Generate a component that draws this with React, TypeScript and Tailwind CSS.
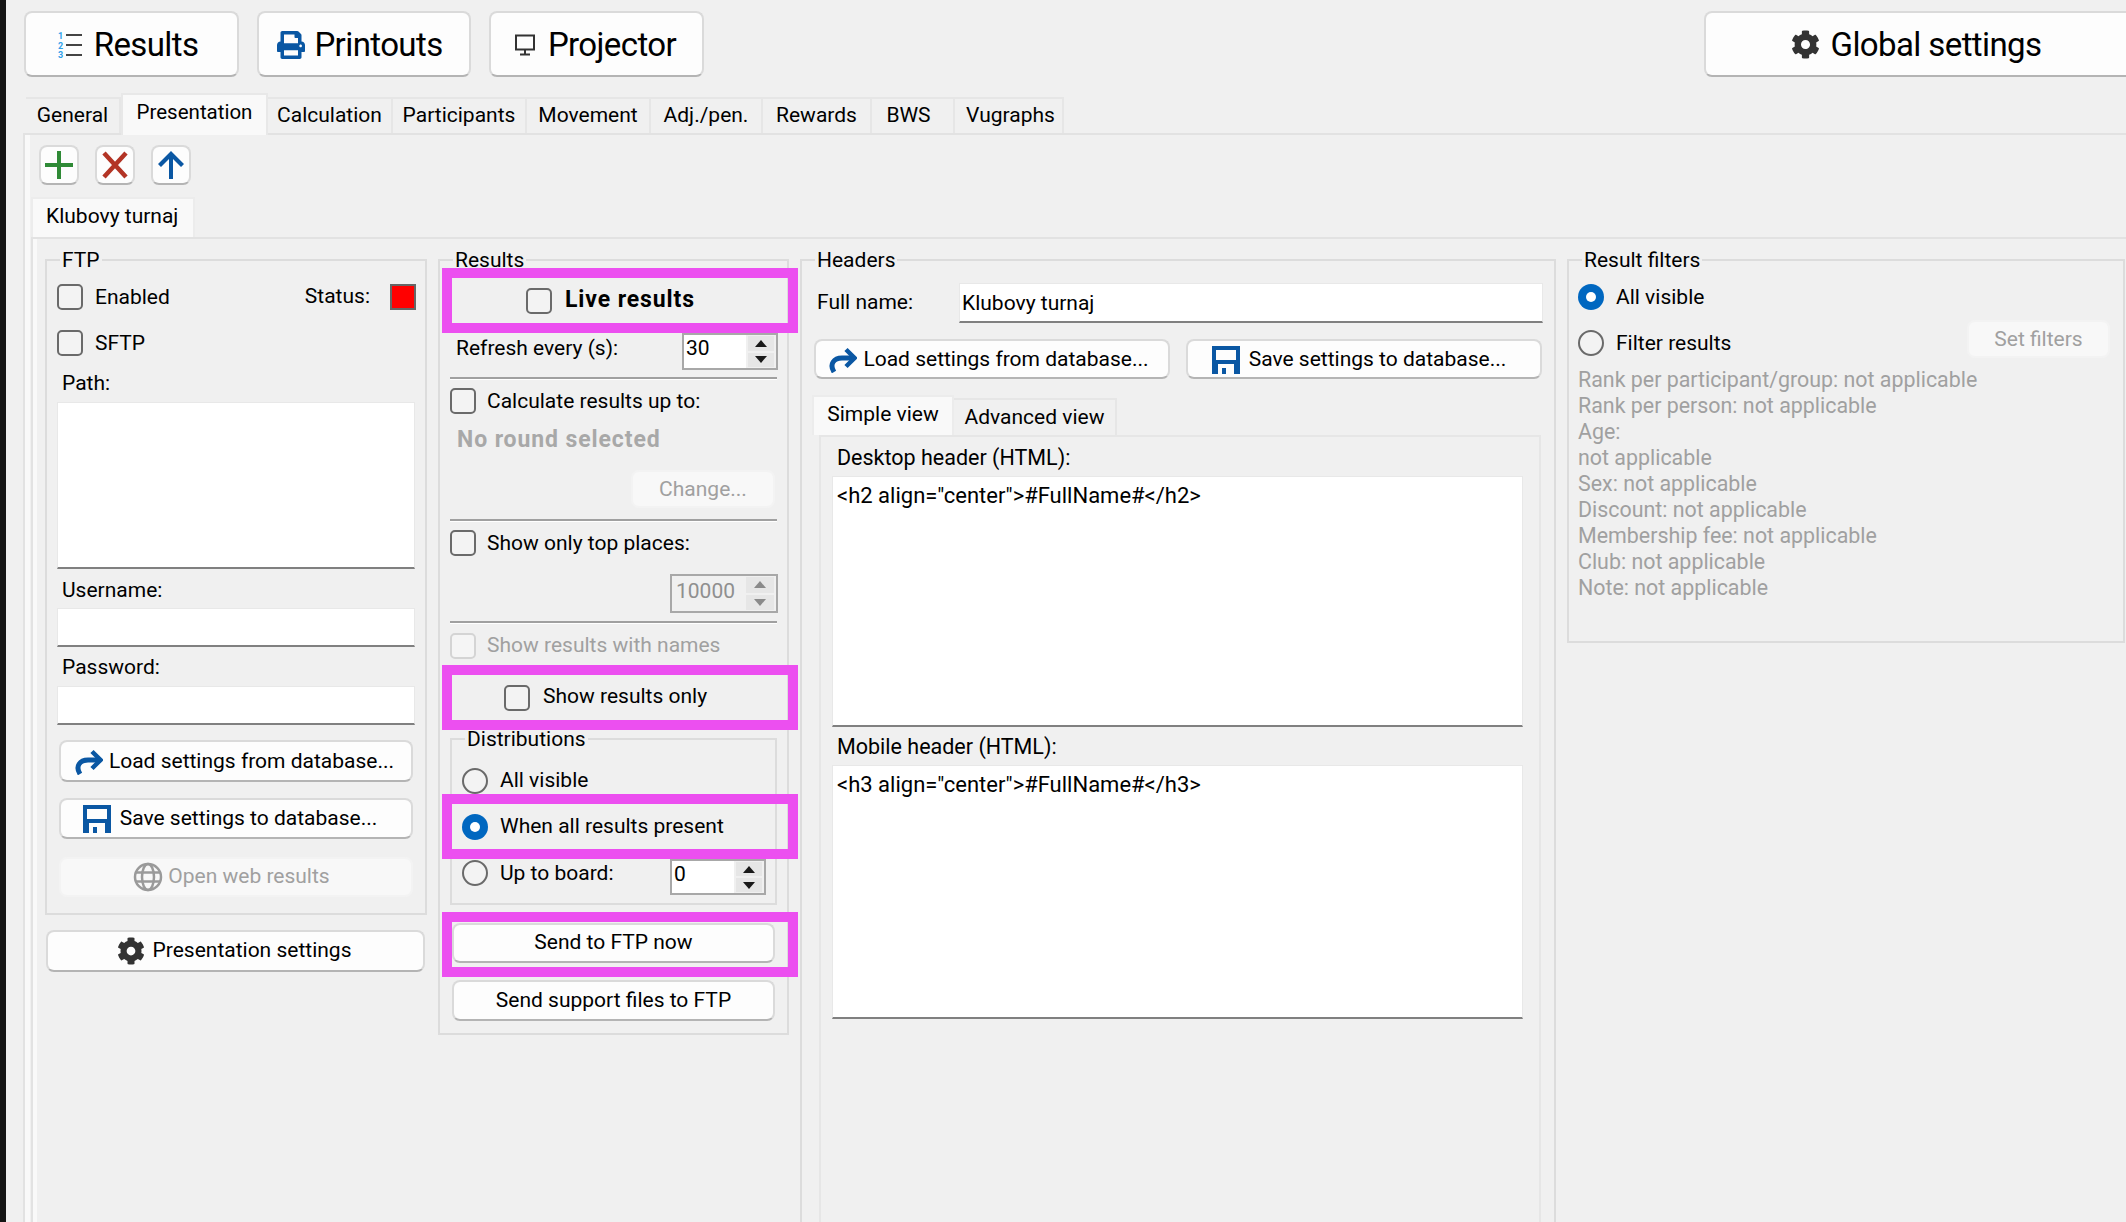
import type { ReactNode } from "react";
import { FaCog, FaPrint } from "react-icons/fa";

function Gear({ size }: { size: number }) {
  return <FaCog size={size} className="shrink-0 text-[#333333]" />;
}

function ReplyIcon() {
  return (
    <svg width="28" height="26" viewBox="0 0 28 26" fill="none" className="shrink-0">
      <path d="M5 25 C0 17 5 11 13 11 L24 11" stroke="#0a57a3" strokeWidth="5" />
      <path d="M17 2.5 L25.5 11 L17 19.5" stroke="#0a57a3" strokeWidth="4.5" />
    </svg>
  );
}

function SaveIcon() {
  return (
    <svg width="28" height="28" viewBox="0 0 28 28" className="shrink-0">
      <path
        fillRule="evenodd"
        d="M0 0H28V28H22V18H6V28H0ZM4 4V14H24V4ZM10 22H14V28H10Z"
        fill="#0a57a3"
      />
    </svg>
  );
}

function GlobeIcon() {
  return (
    <svg width="30" height="30" viewBox="0 0 30 30" fill="none" stroke="#9a9a9a" strokeWidth="2.5" className="shrink-0">
      <circle cx="15" cy="15" r="13" />
      <ellipse cx="15" cy="15" rx="6" ry="13" />
      <path d="M2 10.5H28M2 19.5H28" />
    </svg>
  );
}

function ListIcon() {
  return (
    <svg width="26" height="30" viewBox="0 0 26 30" className="shrink-0">
      <text x="1" y="9" fontSize="9" fontWeight="700" fill="#2fa0ea">1</text>
      <text x="1" y="18.5" fontSize="9" fontWeight="700" fill="#2fa0ea">2</text>
      <text x="1" y="28" fontSize="9" fontWeight="700" fill="#2fa0ea">3</text>
      <path d="M9 4H25V6H9ZM9 14H25V16H9ZM9 24H25V26H9Z" fill="#444444" />
    </svg>
  );
}

function MonitorIcon() {
  return (
    <svg width="22" height="22" viewBox="0 0 22 22" fill="none" className="shrink-0">
      <rect x="2" y="1.5" width="18" height="14" stroke="#333333" strokeWidth="2" />
      <path d="M11 16V20M6 20.5H16" stroke="#333333" strokeWidth="2" />
    </svg>
  );
}

function Checkbox({ disabled }: { disabled?: boolean }) {
  return (
    <span
      className={
        disabled
          ? "h-[26px] w-[26px] shrink-0 rounded-[5px] border-2 border-[#d4d4d4] bg-[#f5f5f5]"
          : "h-[26px] w-[26px] shrink-0 rounded-[5px] border-2 border-[#6a6a6a] bg-[#f3f3f3]"
      }
    />
  );
}

function Radio({ checked }: { checked?: boolean }) {
  if (checked) {
    return (
      <span className="flex h-[26px] w-[26px] shrink-0 items-center justify-center rounded-full bg-[#0067c0]">
        <span className="h-[10px] w-[10px] rounded-full bg-white" />
      </span>
    );
  }
  return <span className="h-[26px] w-[26px] shrink-0 rounded-full border-2 border-[#6a6a6a] bg-[#f3f3f3]" />;
}

function Btn({
  children,
  className,
  disabled,
}: {
  children: ReactNode;
  className: string;
  disabled?: boolean;
}) {
  return (
    <div
      className={`flex shrink-0 items-center justify-center rounded-[8px] border-2 ${
        disabled
          ? "border-[#f3f3f3] bg-[#f8f8f8] text-[#a0a0a0]"
          : "border-[#dadada] border-b-[#b4b4b4] bg-[#fdfdfd] text-black"
      } ${className}`}
    >
      {children}
    </div>
  );
}

function Group({
  title,
  legendLeft,
  className,
  children,
}: {
  title: string;
  legendLeft: string;
  className: string;
  children: ReactNode;
}) {
  return (
    <div className={`relative shrink-0 border-2 border-[#dcdcdc] ${className}`}>
      <span className={`absolute -top-[16px] ${legendLeft} bg-[#f0f0f0] px-[2px] leading-[30px]`}>{title}</span>
      {children}
    </div>
  );
}

function Input({ className, children }: { className: string; children?: ReactNode }) {
  return (
    <div className={`shrink-0 border border-b-2 border-[#e8e8e8] border-b-[#808080] bg-white ${className}`}>
      {children}
    </div>
  );
}

function Spinner({
  value,
  className,
  disabled,
  textClass,
}: {
  value: string;
  className: string;
  disabled?: boolean;
  textClass: string;
}) {
  const arrow = disabled ? "#8a8a8a" : "#1a1a1a";
  return (
    <div
      className={`flex shrink-0 border-2 ${
        disabled ? "border-[#a8a8a8] bg-[#f0f0f0] text-[#8f8f8f]" : "border-[#a8a8a8] bg-white text-black"
      } ${className}`}
    >
      <span className={`pl-[2px] ${textClass}`}>{value}</span>
      <div className="flex flex-1 flex-col gap-[2px] bg-[#f0f0f0] px-[2px] py-[1px]">
        <div className="flex flex-1 items-center justify-center bg-[#e6e6e6]">
          <svg width="12" height="7" viewBox="0 0 12 7">
            <path d="M6 0L12 7H0Z" fill={arrow} />
          </svg>
        </div>
        <div className="flex flex-1 items-center justify-center bg-[#e6e6e6]">
          <svg width="12" height="7" viewBox="0 0 12 7">
            <path d="M6 7L12 0H0Z" fill={arrow} />
          </svg>
        </div>
      </div>
    </div>
  );
}

function Divider({ className }: { className: string }) {
  return <div className={`ml-[10px] h-[3px] w-[327px] border-t-2 border-[#a0a0a0] bg-white ${className}`} />;
}

function Pink({ className, children }: { className: string; children: ReactNode }) {
  return <div className={`relative z-10 w-[356px] shrink-0 border-[10px] border-[#ec4ff0] ${className}`}>{children}</div>;
}

const mainTabs = [
  { label: "General", w: "w-[95px]" },
  { label: "Presentation", w: "w-[147px]", active: true },
  { label: "Calculation", w: "w-[125px]" },
  { label: "Participants", w: "w-[134px]" },
  { label: "Movement", w: "w-[124px]" },
  { label: "Adj./pen.", w: "w-[112px]" },
  { label: "Rewards", w: "w-[109px]" },
  { label: "BWS", w: "w-[83px] pr-[8px]" },
  { label: "Vugraphs", w: "w-[109px] pl-[4px]" },
];

const filterLines = [
  "Rank per participant/group: not applicable",
  "Rank per person: not applicable",
  "Age:",
  "not applicable",
  "Sex: not applicable",
  "Discount: not applicable",
  "Membership fee: not applicable",
  "Club: not applicable",
  "Note: not applicable",
];

export default function App() {
  return (
    <div className="flex h-screen w-full overflow-hidden bg-[#f0f0f0] font-['Roboto',sans-serif] text-[21px] text-black">
      <div className="w-[6px] shrink-0 bg-[#141414]" />
      <div className="flex min-w-0 flex-1 flex-col">
        {/* top command bar */}
        <div className="flex h-[93px] shrink-0 items-start gap-[18px] pl-[18px] pt-[11px] text-[33px] tracking-[-0.6px]">
          <Btn className="h-[66px] w-[215px] gap-[11px] pr-[8px] pt-[1px]">
            <ListIcon />
            Results
          </Btn>
          <Btn className="h-[66px] w-[214px] gap-[9px] pr-[8px] pt-[1px]">
            <FaPrint size={28} className="shrink-0 text-[#0a57a3]" />
            Printouts
          </Btn>
          <Btn className="h-[66px] w-[215px] gap-[12px] pr-[3px] pt-[1px]">
            <MonitorIcon />
            Projector
          </Btn>
          <Btn className="ml-auto -mr-[30px] h-[66px] w-[452px] gap-[11px] pr-[28px] pt-[1px]">
            <Gear size={29} />
            Global settings
          </Btn>
        </div>

        {/* main tabs */}
        <div className="flex h-[40px] shrink-0 items-end pl-[20px]">
          {mainTabs.map((t) => (
            <div
              key={t.label}
              className={
                t.active
                  ? "z-10 -mb-[2px] flex h-[42px] items-start justify-center border-x-2 border-t-2 border-[#e8e8e8] bg-[#f9f9f9] pt-[2px] text-[20.5px] " + t.w
                  : "flex h-[36px] items-center justify-center border-r-2 border-t-2 border-[#e6e6e6] " + t.w
              }
            >
              {t.label}
            </div>
          ))}
        </div>

        {/* outer tab pane */}
        <div className="ml-[17px] flex min-h-0 flex-1 flex-col border-l-2 border-t-2 border-[#e2e2e2] bg-[#f9f9f9] pl-[5px]">
          <div className="flex min-h-0 flex-1 flex-col bg-[#f0f0f0]">
            <div className="ml-[9px] mt-[10px] flex gap-[16px]">
              <Btn className="h-[40px] w-[40px]">
                <svg width="32" height="32" viewBox="0 0 32 32">
                  <path d="M14 2H18V14H30V18H18V30H14V18H2V14H14Z" fill="#2f8a36" />
                </svg>
              </Btn>
              <Btn className="h-[40px] w-[40px]">
                <svg width="30" height="30" viewBox="0 0 30 30">
                  <path d="M4 3L26 27M26 3L4 27" stroke="#b33425" strokeWidth="4.5" />
                </svg>
              </Btn>
              <Btn className="h-[40px] w-[40px]">
                <svg width="28" height="32" viewBox="0 0 28 32">
                  <path d="M14 2L27 15L24 18L16 10V30H12V10L4 18L1 15Z" fill="#0a57a3" />
                </svg>
              </Btn>
            </div>
            <div className="ml-[1px] mt-[12px] flex h-[40px] w-[164px] shrink-0 items-center border-x-2 border-t-2 border-[#ececec] bg-[#f9f9f9] pb-[3px] pl-[13px]">
              Klubovy turnaj
            </div>

            {/* sub tab pane */}
            <div className="ml-[1px] flex min-h-0 flex-1 border-l-2 border-t-2 border-[#e2e2e2] bg-[#f9f9f9] pl-[4px]">
              <div className="flex min-h-0 flex-1 items-start gap-[11px] bg-[#f0f0f0] pl-[8px] pt-[20px]">
                {/* FTP column */}
                <div className="flex w-[382px] shrink-0 flex-col">
                  <Group title="FTP" legendLeft="left-[13px]" className="flex w-[382px] flex-col px-[9px] pb-[16px]">
                    <div className="mt-[23px] flex h-[26px] items-center gap-[12px] pl-[1px]">
                      <Checkbox />
                      <span className="pt-[2px]">Enabled</span>
                      <span className="ml-auto mr-[8px]">Status:</span>
                      <span className="h-[26px] w-[26px] border-2 border-[#666666] bg-[#ff0000]" />
                    </div>
                    <div className="mt-[20px] flex h-[26px] items-center gap-[12px] pl-[1px]">
                      <Checkbox />
                      <span className="pt-[2px]">SFTP</span>
                    </div>
                    <div className="ml-[6px] mt-[14px] h-[26px] leading-[26px]">Path:</div>
                    <Input className="ml-[1px] mt-[6px] h-[167px] w-[358px]" />
                    <div className="ml-[6px] mt-[8px] h-[26px] leading-[26px]">Username:</div>
                    <Input className="ml-[1px] mt-[5px] h-[39px] w-[358px]" />
                    <div className="ml-[6px] mt-[7px] h-[26px] leading-[26px]">Password:</div>
                    <Input className="ml-[1px] mt-[6px] h-[39px] w-[358px]" />
                    <Btn className="ml-[3px] mt-[15px] h-[42px] w-[354px] gap-[6px] pr-[3px] pt-[1px]">
                      <ReplyIcon />
                      Load settings from database...
                    </Btn>
                    <Btn className="ml-[3px] mt-[16px] h-[41px] w-[354px] gap-[9px] pr-[12px] pt-[1px]">
                      <SaveIcon />
                      Save settings to database...
                    </Btn>
                    <Btn disabled className="ml-[3px] mt-[18px] h-[40px] w-[354px] gap-[5px] pr-[9px]">
                      <GlobeIcon />
                      Open web results
                    </Btn>
                  </Group>
                  <Btn className="ml-[1px] mt-[15px] h-[42px] w-[379px] gap-[8px] pr-[3px]">
                    <Gear size={28} />
                    Presentation settings
                  </Btn>
                </div>

                {/* Results column */}
                <Group title="Results" legendLeft="left-[13px]" className="flex w-[351px] flex-col pb-[12px]">
                  <Pink className="ml-[2px] mt-[7px] flex h-[65px] items-center gap-[13px] pl-[74px] text-[23px] font-bold tracking-[0.9px]">
                    <Checkbox />
                    <span>Live results</span>
                  </Pink>
                  <div className="flex h-[37px] items-center">
                    <span className="-mt-[5px] ml-[16px] w-[226px]">Refresh every (s):</span>
                    <Spinner value="30" className="h-[37px] w-[96px]" textClass="w-[62px] leading-[26px]" />
                  </div>
                  <Divider className="mt-[7px]" />
                  <div className="ml-[10px] mt-[8px] flex h-[26px] items-center gap-[11px]">
                    <Checkbox />
                    <span className="pt-[2px]">Calculate results up to:</span>
                  </div>
                  <div className="ml-[17px] mt-[13px] h-[26px] text-[23px] font-bold leading-[26px] tracking-[0.9px] text-[#a8a8a8]">
                    No round selected
                  </div>
                  <Btn disabled className="ml-[191px] mt-[17px] h-[38px] w-[144px] pt-[2px]">
                    Change...
                  </Btn>
                  <Divider className="mt-[11px]" />
                  <div className="ml-[10px] mt-[8px] flex h-[26px] items-center gap-[11px]">
                    <Checkbox />
                    <span className="pt-[2px]">Show only top places:</span>
                  </div>
                  <Spinner disabled value="10000" className="ml-[230px] mt-[18px] h-[39px] w-[108px]" textClass="w-[72px] pl-[4px] leading-[31px]" />
                  <Divider className="mt-[8px]" />
                  <div className="ml-[10px] mt-[9px] flex h-[26px] items-center gap-[11px] text-[#a0a0a0]">
                    <Checkbox disabled />
                    <span>Show results with names</span>
                  </div>
                  <Pink className="ml-[2px] mt-[6px] flex h-[65px] items-center gap-[13px] pl-[52px]">
                    <Checkbox />
                    <span className="-mt-[2px]">Show results only</span>
                  </Pink>
                  <Group title="Distributions" legendLeft="left-[13px]" className="ml-[10px] mt-[8px] flex h-[167px] w-[327px] flex-col">
                    <div className="mt-[28px] flex h-[26px] items-center gap-[12px] pl-[10px]">
                      <Radio />
                      <span>All visible</span>
                    </div>
                    <Pink className="-ml-[10px] flex h-[65px] items-center gap-[12px] pl-[10px]">
                      <Radio checked />
                      <span>When all results present</span>
                    </Pink>
                    <div className="flex h-[36px] items-start pl-[10px]">
                      <div className="mt-[1px] flex">
                        <Radio />
                      </div>
                      <span className="ml-[12px] w-[170px] leading-[28px]">Up to board:</span>
                      <Spinner value="0" className="h-[36px] w-[96px]" textClass="w-[62px] leading-[26px]" />
                    </div>
                  </Group>
                  <Pink className="ml-[2px] mt-[7px] h-[65px]">
                    <Btn className="mt-[1px] h-[40px] w-[323px]">Send to FTP now</Btn>
                  </Pink>
                  <Btn className="ml-[12px] mt-[3px] h-[41px] w-[323px]">Send support files to FTP</Btn>
                </Group>

                {/* Headers column */}
                <Group title="Headers" legendLeft="left-[13px]" className="flex min-h-[1000px] w-[756px] flex-col">
                  <div className="mt-[22px] flex h-[40px] items-center">
                    <span className="ml-[15px] w-[142px]">Full name:</span>
                    <Input className="h-[40px] w-[584px] pl-[2px] leading-[38px]">Klubovy turnaj</Input>
                  </div>
                  <div className="ml-[12px] mt-[16px] flex gap-[16px]">
                    <Btn className="h-[40px] w-[356px] gap-[6px] pr-[6px] pt-[1px]">
                      <ReplyIcon />
                      Load settings from database...
                    </Btn>
                    <Btn className="h-[40px] w-[356px] gap-[9px] pr-[10px] pt-[1px]">
                      <SaveIcon />
                      Save settings to database...
                    </Btn>
                  </div>
                  <div className="ml-[10px] mt-[16px] flex h-[40px] items-end">
                    <div className="flex h-[40px] w-[142px] items-start justify-center border-x-2 border-t-2 border-[#ececec] bg-[#f9f9f9] pt-[2px]">
                      Simple view
                    </div>
                    <div className="flex h-[37px] w-[163px] items-center justify-center border-r-2 border-t-2 border-[#e6e6e6]">
                      Advanced view
                    </div>
                  </div>
                  <div className="ml-[17px] flex w-[722px] flex-1 flex-col border-2 border-[#e6e6e6] bg-[#f0f0f0] pl-[11px] text-[21.5px]">
                    <div className="ml-[5px] mt-[8px] h-[26px] leading-[26px]">Desktop header (HTML):</div>
                    <Input className="mt-[5px] h-[251px] w-[691px] pl-[4px] pt-[4px] text-[22px] leading-[30px]">
                      {'<h2 align="center">#FullName#</h2>'}
                    </Input>
                    <div className="ml-[5px] mt-[7px] h-[26px] leading-[26px]">Mobile header (HTML):</div>
                    <Input className="mt-[5px] h-[254px] w-[691px] pl-[4px] pt-[4px] text-[22px] leading-[30px]">
                      {'<h3 align="center">#FullName#</h3>'}
                    </Input>
                  </div>
                </Group>

                {/* Result filters column */}
                <Group title="Result filters" legendLeft="left-[13px]" className="flex w-[558px] flex-col pb-[40px]">
                  <div className="ml-[9px] mt-[23px] flex h-[26px] items-center gap-[12px]">
                    <Radio checked />
                    <span className="pt-[2px]">All visible</span>
                  </div>
                  <div className="ml-[9px] mt-[10px] flex h-[38px] items-start">
                    <div className="mt-[10px] flex h-[26px] items-center gap-[12px]">
                      <Radio />
                      <span className="pt-[2px]">Filter results</span>
                    </div>
                    <Btn disabled className="ml-auto mr-[13px] h-[38px] w-[143px] pt-[2px]">
                      Set filters
                    </Btn>
                  </div>
                  <div className="ml-[9px] mt-[9px] flex flex-col text-[21.4px] leading-[26px] text-[#a0a0a0]">
                    {filterLines.map((l) => (
                      <div key={l}>{l}</div>
                    ))}
                  </div>
                </Group>
              </div>
            </div>
          </div>
        </div>
      </div>
    </div>
  );
}
